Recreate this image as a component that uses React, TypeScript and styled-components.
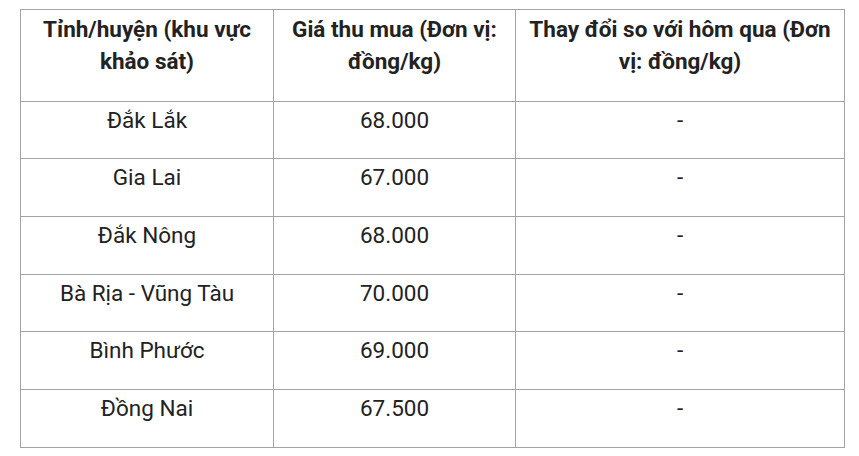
import React from "react";
import styled, { createGlobalStyle } from "styled-components";

const Global = createGlobalStyle`
  html, body { margin: 0; padding: 0; background: #ffffff; }
  body { font-family: Roboto, "Noto Sans", "Liberation Sans", sans-serif; color: #222222; }
`;

const Page = styled.div`
  padding: 9px 0 0 20px;
`;

const Table = styled.table`
  border-collapse: collapse;
  table-layout: fixed;
  width: 824px;
  font-size: 22.5px;
  line-height: 32px;
`;

const HeadRow = styled.tr`
  height: 92px;
`;

const BodyRow = styled.tr<{ $h: number }>`
  height: ${(p) => p.$h}px;
`;

const Th = styled.th`
  border: 1px solid #a3a3a3;
  padding: 3px 10px 0;
  vertical-align: top;
  text-align: center;
  font-weight: 700;
  color: #222222;
`;

const Td = styled.td`
  border: 1px solid #a3a3a3;
  padding: 2px 10px 0;
  vertical-align: top;
  text-align: center;
  font-weight: 400;
  color: #222222;
`;

const rows = [
  ["Đắk Lắk", "68.000", "-"],
  ["Gia Lai", "67.000", "-"],
  ["Đắk Nông", "68.000", "-"],
  ["Bà Rịa - Vũng Tàu", "70.000", "-"],
  ["Bình Phước", "69.000", "-"],
  ["Đồng Nai", "67.500", "-"],
];

const heights = [57, 58, 58, 57, 58, 58];

export default function App() {
  return (
    <>
      <Global />
      <Page>
        <Table>
          <colgroup>
            <col style={{ width: 253 }} />
            <col style={{ width: 242 }} />
            <col style={{ width: 329 }} />
          </colgroup>
          <thead>
            <HeadRow>
              <Th>Tỉnh/huyện (khu vực khảo sát)</Th>
              <Th>Giá thu mua (Đơn vị: đồng/kg)</Th>
              <Th>Thay đổi so với hôm qua (Đơn vị: đồng/kg)</Th>
            </HeadRow>
          </thead>
          <tbody>
            {rows.map((r, i) => (
              <BodyRow key={i} $h={heights[i]}>
                <Td>{r[0]}</Td>
                <Td>{r[1]}</Td>
                <Td>{r[2]}</Td>
              </BodyRow>
            ))}
          </tbody>
        </Table>
      </Page>
    </>
  );
}
